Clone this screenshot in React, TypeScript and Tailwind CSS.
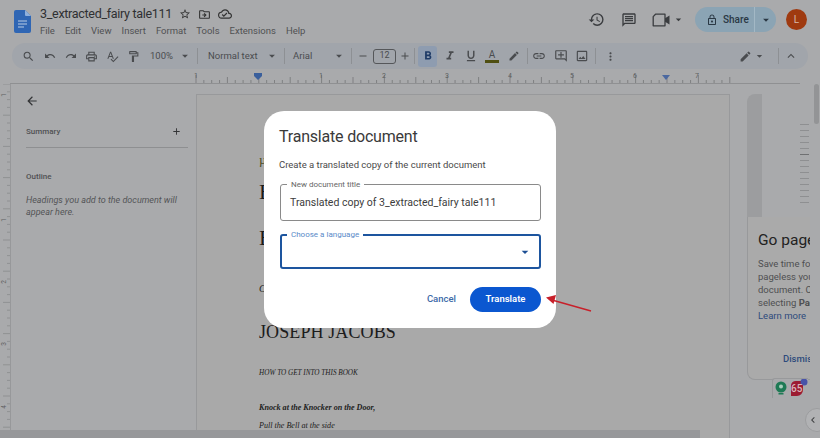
import React from 'react';
import {
  MdAdd, MdArrowBack, MdArrowDropDown, MdChevronLeft, MdEdit, MdExpandLess, MdFormatBold, MdFormatItalic,
  MdFormatUnderlined, MdHistory, MdLink, MdLockOutline, MdMoreVert, MdOutlineAddComment, MdOutlineCloudDone,
  MdOutlineDriveFileMove, MdOutlineFormatPaint, MdOutlineImage, MdOutlineMessage, MdOutlinePrint, MdOutlineSearch,
  MdOutlineSpellcheck, MdRedo, MdStarBorder, MdUndo, MdRemove,
} from 'react-icons/md';

const roboto = { fontFamily: 'Roboto, sans-serif' };

const DocsLogo = () => (
  <svg width="17" height="23" viewBox="0 0 17 23">
    <path d="M2 0h9l6 6v15a2 2 0 0 1-2 2H2a2 2 0 0 1-2-2V2a2 2 0 0 1 2-2z" fill="#2f66b4" />
    <path d="M11 0l6 6h-5a1 1 0 0 1-1-1z" fill="#8fb0dc" />
    <path d="M4 11h9M4 14h9M4 17h6" stroke="#b9cbe3" strokeWidth="1.2" />
  </svg>
);

const MeetIcon = () => (
  <svg width="19" height="14" viewBox="0 0 19 14" className="ml-[15px]">
    <path d="M3.5 1.2H13v11.6H1.2V3.6z" fill="none" stroke="#3a3c3f" strokeWidth="1.3" strokeLinejoin="round" />
    <path d="M13 5.2l4.5-2.8v9.2L13 8.8z" fill="#3a3c3f" />
  </svg>
);

const TopRuler = () => {
  const ticks = [];
  for (let i = 0; i <= 68; i++) {
    const x = 196 + i * 7.85;
    const long = i % 8 === 0 ? 8 : i % 4 === 0 ? 6 : 3;
    ticks.push(<line key={i} x1={x} x2={x} y1={11 - long} y2={11} stroke="#6d6e70" strokeWidth="0.7" />);
  }
  return (
    <svg width="820" height="12" viewBox="0 0 820 12">
      <line x1="10" x2="800" y1="11.5" y2="11.5" stroke="#8f9092" />
      {ticks}
      {[['1', 196], ['1', 321], ['2', 384], ['3', 447], ['4', 510], ['5', 572], ['6', 635], ['7', 697]].map(([t, x]) => (
        <text key={`${t}-${x}`} x={Number(x)} y="6" fontSize="7" fill="#5d5e60" textAnchor="middle" style={roboto}>{t}</text>
      ))}
      <path d="M254 1h8v3l-4 4-4-4z" fill="#3a5f9c" />
      <path d="M662 3h8l-4 5z" fill="#4b68a0" />
    </svg>
  );
};

const SideRuler = () => {
  const ticks = [];
  for (let i = 0; i < 46; i++) {
    const y = 0 + i * 7.8;
    ticks.push(<line key={i} x1={i % 4 === 0 ? 3 : 7} x2="10" y1={y} y2={y} stroke="#808183" strokeWidth="0.6" />);
  }
  return (
    <svg width="11" height="354" viewBox="0 0 11 354" className="shrink-0">
      <line x1="10.5" x2="10.5" y1="0" y2="354" stroke="#97989a" />
      {ticks}
      {[['1', 11], ['1', 136], ['2', 198], ['3', 260], ['4', 323]].map(([t, y]) => (
        <text key={`${t}-${y}`} x="6" y={Number(y)} fontSize="6.5" fill="#5d5e60" textAnchor="middle" transform={`rotate(-90 6 ${y})`} style={roboto}>{t}</text>
      ))}
    </svg>
  );
};

const Tool = ({ children, w = 'w-[21px]' }: { children: React.ReactNode; w?: string }) => (
  <div className={`${w} h-[26px] shrink-0 flex items-center justify-center text-[#4a4c4f]`}>{children}</div>
);
const Sep = () => <div className="w-px h-[16px] bg-[#8d9094] shrink-0" />;
const Caret = () => <MdArrowDropDown size={14} />;

export default function App() {
  return (
    <div className="relative w-[820px] h-[438px] overflow-hidden bg-[#a9aaac] text-[#3a3b3d]" style={roboto}>
      {/* header */}
      <header className="h-[43px] flex items-start">
        <div className="ml-[14px] mt-[10px]"><DocsLogo /></div>
        <div className="ml-[9px] mt-[5px]">
          <div className="flex items-center h-[18px]">
            <span className="text-[12.5px] tracking-[-0.3px] text-[#2f3032] whitespace-nowrap w-[139px]">3_extracted_fairy tale111</span>
            <MdStarBorder size={12} className="text-[#333]" />
            <MdOutlineDriveFileMove size={13} className="ml-[7px] text-[#333]" />
            <MdOutlineCloudDone size={14} className="ml-[7px] text-[#333]" />
          </div>
          <nav className="flex gap-[10px] text-[9.5px] text-[#505153] mt-[1px] whitespace-nowrap">
            <span>File</span><span>Edit</span><span>View</span><span>Insert</span><span>Format</span><span>Tools</span><span>Extensions</span><span>Help</span>
          </nav>
        </div>
        <div className="ml-auto flex items-center h-[25px] mt-[7px] text-[#3a3c3f]">
          <MdHistory size={17} />
          <MdOutlineMessage size={16} className="ml-[16px]" />
          <MeetIcon />
          <MdArrowDropDown size={13} className="ml-[1px]" />
          <div className="ml-[10px] w-[81px] h-[25px] rounded-full bg-[#8ba4b4] flex items-center text-[#2a3844]">
            <MdLockOutline size={12} className="ml-[11px]" />
            <span className="ml-[5px] text-[10px] font-medium w-[29px]">Share</span>
            <div className="ml-[2px] w-px h-[25px] bg-[#a3b8c5]" />
            <MdArrowDropDown size={14} className="ml-[4px]" />
          </div>
          <div className="ml-[10px] mr-[13px] w-[21px] h-[21px] rounded-full bg-[#9f3a10] text-[#d8b9a8] text-[10px] flex items-center justify-center">L</div>
        </div>
      </header>

      {/* toolbar */}
      <div className="ml-[12px] w-[796px] h-[26px] rounded-full bg-[#a1a5ab] flex items-center pl-[6px] text-[9.5px] text-[#4a4c4f]">
        <Tool><MdOutlineSearch size={13} /></Tool>
        <Tool><MdUndo size={12} /></Tool>
        <Tool><MdRedo size={12} /></Tool>
        <Tool><MdOutlinePrint size={13} /></Tool>
        <Tool><MdOutlineSpellcheck size={13} /></Tool>
        <Tool><MdOutlineFormatPaint size={13} /></Tool>
        <span className="ml-[6px] w-[28px] text-[9.5px]">100%</span>
        <Tool w="w-[14px]"><Caret /></Tool>
        <div className="w-[5px]" /><Sep />
        <span className="ml-[10px] w-[57px] text-[9.5px]">Normal text</span>
        <Tool w="w-[14px]"><Caret /></Tool>
        <div className="w-[5px]" /><Sep />
        <span className="ml-[8px] w-[39px] text-[9.5px]">Arial</span>
        <Tool w="w-[14px]"><Caret /></Tool>
        <div className="w-[5px]" /><Sep />
        <Tool w="w-[21px]"><MdRemove size={12} /></Tool>
        <div className="w-[23px] h-[15px] rounded-[3px] border border-[#55575a] flex items-center justify-center text-[9px]">12</div>
        <Tool w="w-[18px]"><MdAdd size={12} /></Tool>
        <Sep />
        <div className="ml-[3px] w-[19px] h-[21px] rounded-[3px] bg-[#8e9cb0] flex items-center justify-center text-[#1e3a66]"><MdFormatBold size={14} /></div>
        <div className="w-[2px]" />
        <Tool><MdFormatItalic size={14} /></Tool>
        <Tool><MdFormatUnderlined size={14} /></Tool>
        <Tool w="w-[22px]">
          <div className="flex flex-col items-center leading-none">
            <span className="text-[10px] leading-[11px]">A</span>
            <span className="w-[14px] h-[3px] bg-[#4f4f12]" />
          </div>
        </Tool>
        <Tool w="w-[21px]"><MdEdit size={12} /></Tool>
        <div className="w-[3px]" /><Sep />
        <Tool w="w-[22px]"><MdLink size={14} /></Tool>
        <Tool w="w-[21px]"><MdOutlineAddComment size={14} /></Tool>
        <Tool w="w-[22px]"><MdOutlineImage size={14} /></Tool>
        <div className="w-[2px]" /><Sep />
        <Tool w="w-[28px]"><MdMoreVert size={13} /></Tool>
        <Tool w="w-[113px]"><span /></Tool>
        <Tool w="w-[16px]"><MdEdit size={13} /></Tool>
        <Tool w="w-[13px]"><Caret /></Tool>
        <div className="w-[12px]" /><Sep />
        <Tool w="w-[24px]"><MdExpandLess size={14} /></Tool>
      </div>

      <div className="mt-[3px]"><TopRuler /></div>

      {/* canvas */}
      <main className="h-[354px] flex">
        <SideRuler />
        <aside className="w-[185px] shrink-0 pl-[15px] pt-[10px]">
          <MdArrowBack size={14} className="ml-[-1px] text-[#333436]" />
          <div className="mt-[19px] w-[162px] h-[21px] border-b border-[#8e8f91] flex items-start justify-between">
            <span className="text-[8px] font-medium text-[#505153] leading-[12px] mt-[-1px]">Summary</span>
            <MdAdd size={11} className="mr-[6px] mt-[-1px] text-[#333436]" />
          </div>
          <div className="mt-[23px] text-[8px] font-medium text-[#505153] leading-[12px]">Outline</div>
          <p className="mt-[11px] w-[155px] text-[9px] leading-[12px] italic text-[#545557]">Headings you add to the document will appear here.</p>
        </aside>
        <section className="flex-1 mt-[10px] flex min-w-0">
          {/* document page */}
          <div className="w-[534px] shrink-0 h-[344px] bg-[#a9a9a9] border-l border-t border-r border-[#98999b] pl-[62px] text-[#1c1c1c] font-['Liberation_Serif'] overflow-hidden">
            <div className="mt-[58px] text-[13px] leading-[14px] text-[#4a4a1c]">µ</div>
            <div className="mt-[12px] text-[22px] leading-[26px]">E</div>
            <div className="mt-[20px] text-[22px] leading-[26px]">E</div>
            <div className="mt-[31px] text-[10px] leading-[14px] italic">C</div>
            <div className="mt-[25px] text-[18px] leading-[22px] tracking-[0.1px]">JOSEPH JACOBS</div>
            <div className="mt-[25px] text-[7.2px] leading-[10px] italic">HOW TO GET INTO THIS BOOK</div>
            <div className="mt-[25px] text-[8.1px] leading-[10px] italic font-bold">Knock at the Knocker on the Door,</div>
            <div className="mt-[8px] text-[8.1px] leading-[10px] italic">Pull the Bell at the side</div>
          </div>
          {/* side panel */}
          <div className="ml-[17px] w-[63px] h-[286px] shrink-0 flex flex-col">
            <div className="h-[123px] flex justify-between">
              <div className="w-[15px] bg-[#9c9d9f] rounded-tl-[8px]" />
              <div className="flex flex-col justify-end gap-[5px] pb-[14px] pr-[1px]">
                {[0, 1, 2, 3, 4, 5, 6, 7, 8, 9, 10, 11, 12, 13].map((i) => (
                  <div key={i} className={`w-[9px] h-px ${i === 5 ? 'bg-[#6f7072]' : 'bg-[#8e8f91]'}`} />
                ))}
              </div>
            </div>
            <div className="h-[163px] bg-[#aaaaaa] border-l border-b border-[#98999b] rounded-bl-[8px] pl-[10px] overflow-hidden whitespace-nowrap">
              <div className="mt-[13px] text-[15.5px] leading-[20px] text-[#222]">Go pageless</div>
              <div className="mt-[7px] text-[9.5px] leading-[13px] text-[#4e4f51]">
                <div>Save time formatting with</div>
                <div>pageless your</div>
                <div>document. Choose</div>
                <div>selecting <b>Pageless</b></div>
                <div className="text-[#2e4a7c]">Learn more</div>
              </div>
              <div className="mt-[30px] ml-[25px] text-[9.5px] font-medium text-[#2e4a7c]">Dismiss</div>
            </div>
          </div>
        </section>
      </main>

      {/* bottom scrollbar */}
      <div className="absolute left-0 bottom-0 w-[700px] h-[8px] bg-[#97989a]" />
      {/* right scrollbar */}
      <div className="absolute right-[1px] top-[84px] w-[5px] h-[40px] rounded-full bg-[#939496]" />

      {/* add-on badges */}
      <div className="absolute left-[772px] top-[378px] w-[36px] h-[20px] border-l border-t border-[#98999b] rounded-tl-[3px] bg-[#a9aaac]">
        <svg width="36" height="20" viewBox="0 0 36 20">
          <circle cx="8" cy="8" r="5.5" fill="#1f7a55" />
          <circle cx="8" cy="7.5" r="2" fill="#a9cdbc" />
          <rect x="5.5" y="14" width="5" height="1.5" fill="#1f7a55" />
          <path d="M18 6a5 5 0 0 1 5-4h7v9a6 6 0 0 1-6 6h-6z" fill="#9c1c32" />
          <circle cx="31" cy="3" r="3.5" fill="#4953a8" />
        </svg>
        <span className="absolute left-[18px] top-[4px] text-[10px] leading-[12px] text-[#d9b6bc] font-medium">65</span>
      </div>
      <div className="absolute left-[805px] top-[408px] w-[24px] h-[24px] rounded-full bg-[#b1b2b4] border border-[#9c9d9f] flex items-center pl-[1px] text-[#3f4042]">
        <MdChevronLeft size={12} />
      </div>

      {/* dialog */}
      <div className="absolute left-[264px] top-[111px] w-[292px] h-[217px] rounded-[20px] bg-white px-[16px] pt-[16px]">
        <h2 className="ml-[-1px] text-[16px] tracking-[-0.2px] leading-[20px] text-[#3a3a3a]">Translate document</h2>
        <p className="ml-[-1px] mt-[11px] text-[9.5px] leading-[14px] text-[#4a4a4a]">Create a translated copy of the current document</p>
        <div className="relative mt-[12px] w-[261px] h-[37px] rounded-[3px] border border-[#8a8a8a] pl-[9px] flex items-center">
          <span className="absolute left-[6px] top-[-5px] bg-white px-[4px] text-[8px] leading-[10px] text-[#666]">New document title</span>
          <span className="text-[10.5px] text-[#3c3c3c] mt-[1px]">Translated copy of 3_extracted_fairy tale111</span>
        </div>
        <div className="relative mt-[13px] w-[261px] h-[35px] rounded-[3px] border-2 border-[#1d559f]">
          <span className="absolute left-[5px] top-[-6px] bg-white px-[4px] text-[8px] leading-[10px] text-[#5a8ac8]">Choose a language</span>
          <MdArrowDropDown size={16} className="absolute right-[6px] top-[8px] text-[#1d4f94]" />
        </div>
        <div className="mt-[18px] w-[261px] flex items-center justify-end">
          <span className="text-[9.5px] font-medium text-[#3c6aa8] mr-[14px]">Cancel</span>
          <button className="w-[71px] h-[25px] rounded-full bg-[#0b57d0] text-white text-[9.5px] font-semibold">Translate</button>
        </div>
      </div>

      {/* red annotation arrow */}
      <svg className="absolute left-[540px] top-[290px]" width="60" height="30" viewBox="0 0 60 30">
        <line x1="51" y1="21" x2="12" y2="10" stroke="#c8202a" strokeWidth="1.3" />
        <path d="M6 7.5l10-2.5-2.5 9z" fill="#c8202a" />
      </svg>
    </div>
  );
}
